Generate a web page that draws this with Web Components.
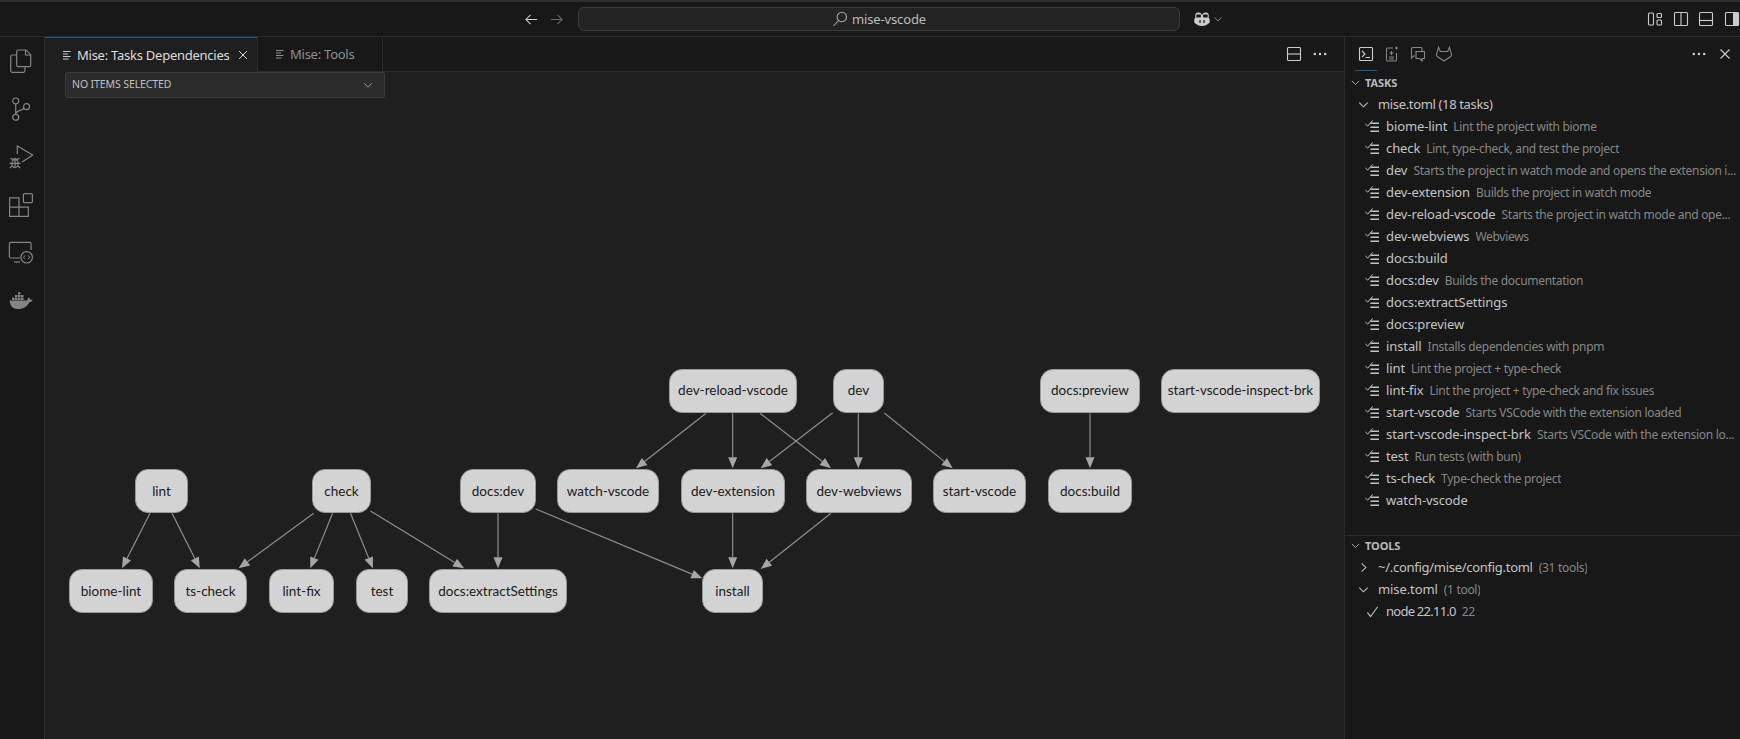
<!DOCTYPE html>
<html>
<head>
<meta charset="utf-8">
<title>Mise: Tasks Dependencies</title>
<style>
    html, body { margin: 0; height: 100%; background: #181818; overflow: hidden; }
    body { display: flex; flex-direction: column; height: 739px; font-family: "Noto Sans", sans-serif; color: #ccc; }
</style>
</head>
<body>
<title-bar></title-bar>
<div style="display:flex;flex:1;min-height:0">
    <activity-bar></activity-bar>
    <editor-area></editor-area>
    <side-panel></side-panel>
</div>

<script>
const ikoner = {
    files: [24, 24, `<path d="M7.7 6H3.2a1.5 1.5 0 0 0-1.5 1.5v14.3a1.5 1.5 0 0 0 1.5 1.5h11.3a1.5 1.5 0 0 0 1.5-1.5v-4.1"/><path d="M7.7 16.2V2.5A1.5 1.5 0 0 1 9.2 1H17l4.7 4.7v10.5a1.5 1.5 0 0 1-1.5 1.5H9.2a1.5 1.5 0 0 1-1.5-1.5z"/><path d="M16.5 1v5h5"/>`],
    git: [24, 24, `<circle cx="6.7" cy="4" r="3"/><circle cx="6.7" cy="20.3" r="3"/><circle cx="17.5" cy="9.7" r="3"/><path d="M6.7 7v10.3M15 11.5c-3 2.6-7 1.5-8.3 5"/>`],
    debug: [24, 24, `<path d="M8.3 9V1l15.4 9-10.500 7"/><ellipse cx="6" cy="18.600" rx="3.200" ry="4"/><path d="M3.500 15.500a2.600 2.600 0 0 1 5 0M2.800 18.300h6.400M6 15v7.500M3.500 14.500 1.500 13M8.500 14.500l2-1.500M.5 18.300h2.300M9.200 18.300h2.300M3 21 1 23M9 21l2 2"/>`],
    ext: [24, 24, `<path d="M.6 4.800h9.400v9.300H.6zM.6 14.100h9.400v9.300H.6zM10 14.100h9.300v9.300H10z"/><rect x="14.400" y=".6" width="9" height="9" rx="1"/>`],
    remote: [24, 24, `<path d="M11 17H1.800A1.500 1.500 0 0 1 .4 15.500V2.800A1.500 1.500 0 0 1 1.800 1.300h18.700A1.500 1.500 0 0 1 22 2.800V9"/><path d="M5 21h6"/><circle cx="17.700" cy="16.300" r="5.700"/><path d="m16.300 14.500-2 1.800 2 1.800M19 14.500l2 1.800-2 1.800" stroke-width="1"/>`],
    docker: [24, 24, `<path fill="#858585" stroke="none" d="M.5 11.500h17.700c.3-1.600 1.200-2.600 1.600-2.900 1 .6 1.500 1.400 1.600 2.300 1-.3 1.700-.2 2.200.2-.7 1.600-1.900 2.100-3.200 2.100-1.900 4-6 6.800-11.200 6.800C3.800 20 1 16.600.5 11.500z"/><path fill="#858585" stroke="none" d="M3 8.600h2.500v2.300H3zM6 8.600h2.500v2.300H6zM9 8.600h2.500v2.300H9zM12 8.600h2.500v2.300H12zM6 5.900h2.500v2.200H6zM9 5.900h2.500v2.200H9zM12 5.900h2.500v2.200H12zM9 3.200h2.500v2.200H9z"/>`],
    back: [16, 16, `<path d="M14 8H2M7 3 2 8l5 5"/>`],
    forward: [16, 16, `<path d="M2 8h12M9 3l5 5-5 5"/>`],
    search: [16, 16, `<circle cx="9.800" cy="6" r="4.700"/><path d="M6.500 9.500 1.500 15"/>`],
    chevD: [16, 16, `<path d="m3.500 6 4.500 4.500L12.500 6"/>`],
    chevR: [16, 16, `<path d="m6 3.500 4.500 4.500L6 12.500"/>`],
    close: [16, 16, `<path d="m3.500 3.500 9 9M12.500 3.500l-9 9"/>`],
    more: [16, 16, `<circle cx="2.800" cy="8" r=".6"/><circle cx="8" cy="8" r=".6"/><circle cx="13.200" cy="8" r=".6"/>`],
    preview: [12, 12, `<path d="M2 2.500h7.500M2 5h5M2 7.500h7.500M2 10h5.500"/>`],
    splitH: [16, 16, `<rect x="1.500" y="1.500" width="13" height="13" rx="1"/><path d="M1.500 8h13"/>`],
    layoutCustom: [16, 16, `<rect x="1.500" y="2" width="5" height="12" rx="1"/><rect x="10" y="2.500" width="4.500" height="4" rx="1"/><rect x="10" y="9" width="4.500" height="5" rx="1"/>`],
    layoutLeft: [16, 16, `<rect x="1.500" y="1.500" width="13" height="13" rx="1"/><path d="M8 1.500v13"/>`],
    layoutBottom: [16, 16, `<rect x="1.500" y="1.500" width="13" height="13" rx="1"/><path d="M1.500 9.500h13"/>`],
    layoutRight: [16, 16, `<rect x="1.500" y="1.500" width="13" height="13" rx="1"/><rect x="9" y="1.500" width="5.500" height="13" fill="#ccc" stroke="none"/>`],
    copilot: [16, 14, `<path fill="#ccc" stroke="none" d="M8 3c.8-2 2.300-2.700 4-2.500 1.900.2 2.800 1.500 2.800 3.300 0 .7-.1 1.300-.3 1.800.7.600 1.200 1.400 1.200 2.400v2c0 .6-.3 1-.8 1.300C13.300 12.900 10.800 14 8 14s-5.300-1.100-6.900-2.700c-.5-.3-.8-.7-.8-1.300V8c0-1 .5-1.800 1.200-2.400-.2-.5-.3-1.100-.3-1.800C1.200 2 2.100.7 4 .5 5.700.3 7.200 1 8 3z"/><path fill="#181818" stroke="none" d="M3.300 2.500h2.600c.6 0 1 .4 1 1v1c0 .6-.4 1-1 1H3.300c-.6 0-1-.4-1-1v-1c0-.6.4-1 1-1zM10.100 2.500h2.600c.6 0 1 .4 1 1v1c0 .6-.4 1-1 1h-2.600c-.6 0-1-.4-1-1v-1c0-.6.4-1 1-1zM5.400 8h1.200v3H5.400zM9.400 8h1.200v3H9.400z"/>`],
    terminal: [16, 16, `<rect x="1.500" y="1.500" width="13" height="13" rx="1"/><path d="m4 5 3 3-3 3M7.500 11.500H12"/>`],
    notebook: [16, 16, `<path d="M9 2H3.500a1 1 0 0 0-1 1v11a1 1 0 0 0 1 1h8a1 1 0 0 0 1-1V7M5 11h5M5 13h5M7.500 5v4M5.500 7h4"/><path d="M11 2h3M12.500.5v3"/>`],
    chats: [16, 16, `<path d="M5 10H3.500L1.500 12V2.500a1 1 0 0 1 1-1H11a1 1 0 0 1 1 1V5"/><path d="M6 5.500h8.500v7H12v2.500l-2.500-2.500H6z"/>`],
    fox: [16, 16, `<path d="M2.500 1.200 4.300 5.500h7.400l1.800-4.300 2 7.300c0 1-.4 1.700-1.100 2.200L8 15l-6.400-4.300C.9 10.200.5 9.500.5 8.500z"/>`],
    check: [16, 16, `<path d="m2.500 9 3.500 4.500L13.500 3"/>`],
    tasks: [14, 13, `<path d="m.4 4 2.300 2.100L7.700.4" stroke-width="1"/><path d="M5.400 3.300H14M5.400 7.300H14M5.400 11.300H14" stroke-width="1.600"/>`]
}

class IkonKomponent extends HTMLElement {
    constructor() {
        super()
        this.shadow = this.attachShadow({ mode: 'open' });
    }

    connectedCallback() {
        const ikon = ikoner[this.getAttribute("navn")]
        const storrelse = this.getAttribute("str") || ikon[0]
        const farge = this.getAttribute("farge") || "#858585"
        const hoyde = storrelse * ikon[1] / ikon[0]
        this.shadow.innerHTML = `
            <style>
                :host { display: inline-flex; flex: none; line-height: 0; }
                svg { fill: none; stroke: ${farge}; stroke-width: ${this.getAttribute("tykk") || 1.1}; overflow: visible; }
            </style>
            <svg width="${storrelse}" height="${hoyde}" viewBox="0 0 ${ikon[0]} ${ikon[1]}">${ikon[2]}</svg>
        `
    }
}

customElements.define("ikon-komp", IkonKomponent)

class TitleBar extends HTMLElement {
    constructor() {
        super()
        this.shadow = this.attachShadow({ mode: 'open' });
    }

    connectedCallback() {
        this.shadow.innerHTML = `
            <style>
                :host {
                    display: flex;
                    align-items: center;
                    flex: none;
                    height: 37px;
                    box-sizing: border-box;
                    border-top: 2px solid #2e2e2e;
                    border-bottom: 1px solid #2b2b2b;
                    background: #181818;
                    padding-left: 524px;
                    overflow: hidden;
                }
                .sok {
                    flex: none;
                    width: 602px;
                    height: 24px;
                    box-sizing: border-box;
                    margin-left: 14px;
                    margin-right: 14px;
                    border: 1px solid #3c3c3c;
                    border-radius: 6px;
                    background: #232323;
                    display: flex;
                    align-items: center;
                    justify-content: center;
                    gap: 4px;
                    font-size: 13px;
                    letter-spacing: -.15px;
                    color: #bbb;
                    padding-bottom: 1px;
                }
                .pil { display: flex; gap: 10px; flex: none; }
                .co { display: flex; align-items: center; gap: 2px; flex: none; }
                .hoyre { display: flex; gap: 9.700px; margin-left: 423px; flex: none; }
            </style>
            <div class="pil">
                <ikon-komp navn="back" str="15" farge="#ccc"></ikon-komp>
                <ikon-komp navn="forward" str="15" farge="#6a6a6a"></ikon-komp>
            </div>
            <div class="sok"><ikon-komp navn="search" str="16" farge="#aaa"></ikon-komp><span>mise-vscode</span></div>
            <div class="co">
                <ikon-komp navn="copilot" str="16"></ikon-komp>
                <ikon-komp navn="chevD" str="12" farge="#aaa"></ikon-komp>
            </div>
            <div class="hoyre">
                <ikon-komp navn="layoutCustom" str="16" farge="#ccc"></ikon-komp>
                <ikon-komp navn="layoutLeft" str="16" farge="#ccc"></ikon-komp>
                <ikon-komp navn="layoutBottom" str="16" farge="#ccc"></ikon-komp>
                <ikon-komp navn="layoutRight" str="16" farge="#ccc"></ikon-komp>
            </div>
        `
    }
}

customElements.define("title-bar", TitleBar)

class ActivityBar extends HTMLElement {
    constructor() {
        super()
        this.shadow = this.attachShadow({ mode: 'open' });
    }

    connectedCallback() {
        let yeh = ""
        const navn = ["files", "git", "debug", "ext", "remote", "docker"]
        navn.forEach(n => {
            yeh += `<ikon-komp navn="${n}" str="24" tykk="1.200"></ikon-komp>`
        })

        this.shadow.innerHTML = `
            <style>
                :host {
                    display: flex;
                    flex-direction: column;
                    flex: none;
                    width: 45px;
                    box-sizing: border-box;
                    border-right: 1px solid #2b2b2b;
                    background: #181818;
                    padding: 12px 0 0 9px;
                    gap: 24px;
                }
            </style>
            ${yeh}
        `
    }
}

customElements.define("activity-bar", ActivityBar)

class EditorArea extends HTMLElement {
    constructor() {
        super()
        this.shadow = this.attachShadow({ mode: 'open' });
    }

    connectedCallback() {
        this.shadow.innerHTML = `
            <style>
                :host {
                    display: flex;
                    flex-direction: column;
                    flex: 1;
                    min-width: 0;
                    background: #1f1f1f;
                }
                .faner {
                    display: flex;
                    flex: none;
                    height: 35px;
                    box-sizing: border-box;
                    background: #181818;
                    border-bottom: 1px solid #2b2b2b;
                    font-size: 13px;
                    letter-spacing: -.25px;
                    white-space: nowrap;
                }
                .fane {
                    display: flex;
                    align-items: center;
                    box-sizing: border-box;
                    height: 35px;
                    gap: 4px;
                    border-right: 1px solid #2b2b2b;
                    color: #8f8f8f;
                }
                .aktiv {
                    width: 213px;
                    padding: 0 7px 0 16px;
                    color: #ddd;
                    background: #1f1f1f;
                    border-top: 1px solid #0f5f9c;
                }
                .aktiv ikon-komp:last-child { margin-left: auto; }
                .annen { width: 125px; padding-left: 16px; height: 34px; }
                .handling { margin-left: auto; display: flex; align-items: center; gap: 10px; padding-right: 16px; }
            </style>
            <div class="faner">
                <div class="fane aktiv">
                    <ikon-komp navn="preview" str="12" farge="#ccc"></ikon-komp>
                    <span>Mise: Tasks Dependencies</span>
                    <ikon-komp navn="close" str="14" farge="#ddd"></ikon-komp>
                </div>
                <div class="fane annen">
                    <ikon-komp navn="preview" str="12" farge="#8f8f8f"></ikon-komp>
                    <span>Mise: Tools</span>
                </div>
                <div class="handling">
                    <ikon-komp navn="splitH" str="16" farge="#ccc"></ikon-komp>
                    <ikon-komp navn="more" str="16" farge="#ccc" tykk="1.300"></ikon-komp>
                </div>
            </div>
            <dep-graf></dep-graf>
        `
    }
}

customElements.define("editor-area", EditorArea)

class DepGraf extends HTMLElement {
    constructor(
        noder = [
            ["dev-reload-vscode", 669, 369, 128], ["dev", 833, 369, 51],
            ["docs:preview", 1040, 369, 100], ["start-vscode-inspect-brk", 1161, 369, 159],
            ["lint", 135, 469, 53], ["check", 312, 469, 59], ["docs:dev", 460, 469, 76],
            ["watch-vscode", 557, 469, 102], ["dev-extension", 681, 469, 104],
            ["dev-webviews", 806, 469, 106], ["start-vscode", 933, 469, 93], ["docs:build", 1048, 469, 84],
            ["biome-lint", 69, 569, 84], ["ts-check", 174, 569, 73], ["lint-fix", 269, 569, 65],
            ["test", 356, 569, 52], ["docs:extractSettings", 429, 569, 138], ["install", 702, 569, 61]
        ],
        kanter = [
            [150, 513.3, 122, 568.3], [172, 513.3, 199.8, 568.3],
            [313.7, 513.3, 238.6, 568.3], [332.6, 513.3, 310.3, 568.3], [350.5, 513.3, 372.9, 568.3],
            [370.5, 511, 464.1, 568.3], [498, 513.3, 498, 568.3], [535.8, 509, 702.3, 578.3],
            [706, 413.3, 636, 468.3], [732.7, 413.3, 732.7, 468.3], [760, 413.3, 831, 468.3],
            [832.7, 412.7, 760.7, 468.3], [858.3, 413.3, 858.3, 468.3], [884.3, 413, 952.7, 468.3],
            [732.7, 513.3, 732.7, 568.3], [831, 513.3, 760.7, 569], [1090, 413.3, 1090, 468.3]
        ]
    ) {
        super()
        this.shadow = this.attachShadow({ mode: 'open' });
        this.noder = noder
        this.kanter = kanter
    }

    // the svg sits at page offset 45,72 so subtract that from the coordinates
    piler() {
        let yeh = ""

        this.kanter.forEach(k => {
            const [x1, y1, x2, y2] = [k[0] - 45, k[1] - 72, k[2] - 45, k[3] - 72]
            const lengde = Math.hypot(x2 - x1, y2 - y1)
            const ux = (x2 - x1) / lengde, uy = (y2 - y1) / lengde
            const bx = x2 - ux * 11, by = y2 - uy * 11
            yeh += `
                <line x1="${x1}" y1="${y1}" x2="${bx}" y2="${by}" />
                <polygon points="${x2},${y2} ${bx - uy * 4.5},${by + ux * 4.5} ${bx + uy * 4.5},${by - ux * 4.5}" />
            `
        })

        return yeh
    }

    bokser() {
        let yeh = ""

        this.noder.forEach(n => {
            // labels in the top row sit a little higher in their box
            const ekstra = n[2] < 400 ? "padding-bottom:3px;" : ""
            yeh += `<graf-node style="left:${n[1] - 45}px;top:${n[2] - 72}px;width:${n[3]}px;${ekstra}">${n[0]}</graf-node>`
        })

        return yeh
    }

    connectedCallback() {
        this.shadow.innerHTML = `
            <style>
                :host {
                    display: block;
                    position: relative;
                    flex: 1;
                    min-height: 0;
                    overflow: hidden;
                }
                svg { position: absolute; left: 0; top: 0; width: 1300px; height: 667px; }
                line { stroke: #8e8e8e; stroke-width: 1.2; }
                polygon { fill: #a6a6a6; }
                .velger {
                    position: relative;
                    margin-left: 20px;
                    width: 320px;
                    height: 26px;
                    box-sizing: border-box;
                    background: #2c2c2c;
                    border: 1px solid #3a3a3a;
                    border-radius: 2px;
                    display: flex;
                    align-items: center;
                    justify-content: space-between;
                    padding: 0 9px 0 6px;
                    font-size: 10.500px;
                    letter-spacing: -.1px;
                    color: #c0c0c0;
                }
                .velger span { padding-bottom: 2px; }
            </style>
            <svg>${this.piler()}</svg>
            ${this.bokser()}
            <div class="velger"><span>NO ITEMS SELECTED</span><ikon-komp navn="chevD" str="14" farge="#aaa"></ikon-komp></div>
        `
    }
}

class GrafNode extends HTMLElement {
    constructor() {
        super()
        this.shadow = this.attachShadow({ mode: 'open' });
    }

    connectedCallback() {
        this.shadow.innerHTML = `
            <style>
                :host {
                    position: absolute;
                    display: flex;
                    align-items: center;
                    justify-content: center;
                    height: 44px;
                    box-sizing: border-box;
                    padding-bottom: 1px;
                    background: #d3d3d3;
                    border: 1px solid #9a9a9a;
                    border-radius: 13px;
                    font-family: Lato, sans-serif;
                    font-size: 13.500px;
                    color: #1a1a1a;
                    white-space: nowrap;
                }
            </style>
            <slot></slot>
        `
    }
}

customElements.define("graf-node", GrafNode)
customElements.define("dep-graf", DepGraf)

class SidePanel extends HTMLElement {
    constructor(
        oppgaver = [
            ["biome-lint", "Lint the project with biome"],
            ["check", "Lint, type-check, and test the project"],
            ["dev", "Starts the project in watch mode and opens the extension i..."],
            ["dev-extension", "Builds the project in watch mode"],
            ["dev-reload-vscode", "Starts the project in watch mode and ope..."],
            ["dev-webviews", "Webviews"],
            ["docs:build", ""],
            ["docs:dev", "Builds the documentation"],
            ["docs:extractSettings", ""],
            ["docs:preview", ""],
            ["install", "Installs dependencies with pnpm"],
            ["lint", "Lint the project + type-check"],
            ["lint-fix", "Lint the project + type-check and fix issues"],
            ["start-vscode", "Starts VSCode with the extension loaded"],
            ["start-vscode-inspect-brk", "Starts VSCode with the extension lo..."],
            ["test", "Run tests (with bun)"],
            ["ts-check", "Type-check the project"],
            ["watch-vscode", ""]
        ]
    ) {
        super()
        this.shadow = this.attachShadow({ mode: 'open' });
        this.oppgaver = oppgaver
    }

    rader() {
        let yeh = ""

        this.oppgaver.forEach(o => {
            yeh += `<tree-rad ikon="tasks" inn="20" label="${o[0]}" info="${o[1]}"></tree-rad>`
        })

        return yeh
    }

    connectedCallback() {
        this.shadow.innerHTML = `
            <style>
                :host {
                    display: flex;
                    flex-direction: column;
                    flex: none;
                    width: 396px;
                    box-sizing: border-box;
                    border-left: 1px solid #2b2b2b;
                    background: #181818;
                }
                .topp {
                    display: flex;
                    align-items: center;
                    flex: none;
                    height: 34px;
                    position: relative;
                    padding-left: 13px;
                    gap: 10px;
                }
                .topp::after {
                    content: "";
                    position: absolute;
                    left: 10px;
                    bottom: 0;
                    width: 22px;
                    height: 1px;
                    background: #0f5f9c;
                }
                .topp .hoyre { margin-left: auto; display: flex; gap: 10px; padding-right: 7px; }
                .seksjon { height: 464px; flex: none; }
                .seksjon2 { border-top: 1px solid #2b2b2b; }
                .seksjon2 .hode { height: 19px; margin-bottom: 1px; }
                .hode {
                    display: flex;
                    align-items: center;
                    height: 22px;
                    padding-left: 4px;
                    gap: 3px;
                    font-size: 11px;
                    font-weight: 700;
                    letter-spacing: -.1px;
                    color: #bbb;
                }
            </style>
            <div class="topp">
                <ikon-komp navn="terminal" str="16" farge="#ccc"></ikon-komp>
                <ikon-komp navn="notebook" str="16"></ikon-komp>
                <ikon-komp navn="chats" str="16"></ikon-komp>
                <ikon-komp navn="fox" str="16"></ikon-komp>
                <div class="hoyre">
                    <ikon-komp navn="more" str="16" farge="#ccc" tykk="1.300"></ikon-komp>
                    <ikon-komp navn="close" str="16" farge="#ccc"></ikon-komp>
                </div>
            </div>
            <div class="seksjon">
                <div class="hode"><ikon-komp navn="chevD" str="13" farge="#bbb"></ikon-komp><span>TASKS</span></div>
                <tree-rad ikon="chevD" inn="11" label="mise.toml (18 tasks)" tett="-.35"></tree-rad>
                ${this.rader()}
            </div>
            <div class="seksjon2">
                <div class="hode"><ikon-komp navn="chevD" str="13" farge="#bbb"></ikon-komp><span>TOOLS</span></div>
                <tree-rad ikon="chevR" inn="11" label="~/.config/mise/config.toml" info="(31 tools)" tett="-.28"></tree-rad>
                <tree-rad ikon="chevD" inn="11" label="mise.toml" info="(1 tool)"></tree-rad>
                <tree-rad ikon="check" inn="20" label="node 22.11.0" info="22" tett="-.75"></tree-rad>
            </div>
        `
    }
}

customElements.define("side-panel", SidePanel)

class TreeRad extends HTMLElement {
    constructor() {
        super()
        this.shadow = this.attachShadow({ mode: 'open' });
    }

    connectedCallback() {
        const ikon = this.getAttribute("ikon")
        const inn = this.getAttribute("inn")
        const info = this.getAttribute("info")
        const smal = ikon === "tasks"
        this.shadow.innerHTML = `
            <style>
                :host {
                    display: flex;
                    align-items: center;
                    height: 22px;
                    box-sizing: border-box;
                    padding-left: ${inn}px;
                    padding-right: 2px;
                    font-size: 13px;
                    white-space: nowrap;
                    letter-spacing: ${this.getAttribute("tett") || -.1}px;
                    color: #c4c4c4;
                }
                .ikon { display: flex; width: ${inn == 11 ? 22 : 21}px; flex: none; }
                .label { flex: none; }
                .info {
                    flex: 0 1 auto;
                    min-width: 0;
                    overflow: hidden;
                    text-overflow: ellipsis;
                    margin-left: 6px;
                    font-size: 12px;
                    letter-spacing: -.3px;
                    color: #878787;
                }
            </style>
            <div class="ikon"><ikon-komp navn="${ikon}" str="${smal ? 14 : 15}" farge="#c4c4c4"></ikon-komp></div>
            <span class="label">${this.getAttribute("label")}</span>
            ${info ? `<span class="info">${info}</span>` : ""}
        `
    }
}

customElements.define("tree-rad", TreeRad)
</script>
</body>
</html>
